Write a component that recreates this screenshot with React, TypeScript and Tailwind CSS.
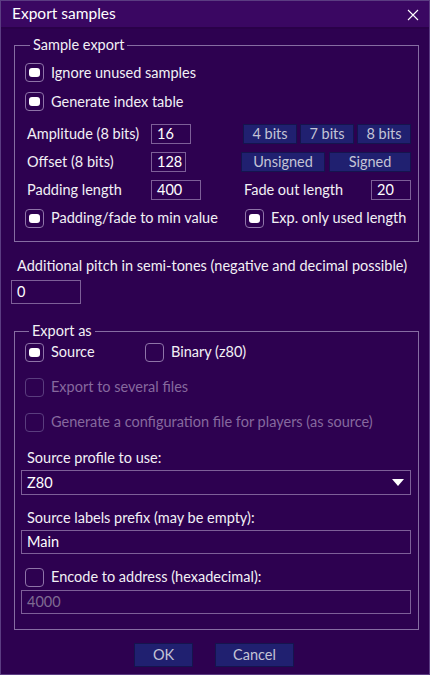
import React from 'react';

const font = { fontFamily: 'Lato, "Noto Sans", sans-serif' };

function Check({ checked = false, disabled = false }: { checked?: boolean; disabled?: boolean }) {
    return (
        <span
            className={`flex h-[19px] w-[19px] shrink-0 items-center justify-center rounded-[4px] border-[1.5px] ${
                disabled ? 'border-[#5a3d7e]' : 'border-[#8e74a8]'
            }`}
        >
            {checked && <span className="h-[9px] w-[11px] rounded-[3px] bg-white" />}
        </span>
    );
}

function CheckRow({ label, checked, disabled, className = '' }: { label: string; checked?: boolean; disabled?: boolean; className?: string }) {
    return (
        <div className={`flex items-center gap-[7px] ${className}`}>
            <Check checked={checked} disabled={disabled} />
            <span className={disabled ? 'text-[#86699e]' : 'text-[#f2f0f5]'}>{label}</span>
        </div>
    );
}

function Field({ value, className = '', dim = false }: { value: string; className?: string; dim?: boolean }) {
    return (
        <div className={`flex items-center border border-[#7d5f98] px-[5px] ${dim ? 'text-[#7f6b92]' : 'text-white'} ${className}`}>{value}</div>
    );
}

function Btn({ label, className = '' }: { label: string; className?: string }) {
    return (
        <div className={`flex h-[20px] items-center justify-center border border-[#15144e] bg-[#202070] text-[#c4c4d6] ${className}`}>{label}</div>
    );
}

export default function App() {
    return (
        <div className="flex h-[675px] w-[430px] flex-col border border-[#5b3c82] bg-[#2d0150] text-[14.5px] text-[#f2f0f5]" style={font}>
            <div className="flex h-[26px] shrink-0 items-center justify-between bg-[#3a0762] pr-[10px] pl-[11px]">
                <span className="text-[15.5px] text-white">Export samples</span>
                <svg width="12" height="12" viewBox="0 0 12 12" className="mt-[1px]">
                    <path d="M1 1L11 11M11 1L1 11" stroke="white" strokeWidth="1.1" fill="none" />
                </svg>
            </div>
            <div className="h-[2px] bg-[#2a0149]" />

            <fieldset className="mt-[7px] ml-[13px] w-[405px] border border-[#866ca2] pt-[4px] pr-[7px] pb-[9px] pl-[10px]">
                <legend className="ml-[5px] h-[18px] px-[3px] leading-[18px]">Sample export</legend>
                <CheckRow className="h-[29px]" label="Ignore unused samples" checked />
                <CheckRow className="h-[29px]" label="Generate index table" checked />
                <div className="mt-[4px] flex h-[28px] items-center pl-[2px]">
                    <span className="w-[124px]">Amplitude (8 bits)</span>
                    <Field value="16" className="h-[20px] w-[40px]" />
                    <div className="ml-auto flex gap-[3px]">
                        <Btn label="4 bits" className="w-[54px]" />
                        <Btn label="7 bits" className="w-[54px]" />
                        <Btn label="8 bits" className="w-[54px]" />
                    </div>
                </div>
                <div className="flex h-[28px] items-center pl-[2px]">
                    <span className="w-[124px]">Offset (8 bits)</span>
                    <Field value="128" className="h-[20px] w-[35px]" />
                    <div className="ml-auto flex gap-[4px]">
                        <Btn label="Unsigned" className="w-[84px]" />
                        <Btn label="Signed" className="w-[82px]" />
                    </div>
                </div>
                <div className="flex h-[28px] items-center pl-[2px]">
                    <div className="flex w-[217px] items-center">
                        <span className="w-[124px]">Padding length</span>
                        <Field value="400" className="h-[20px] w-[50px]" />
                    </div>
                    <span className="flex-1">Fade out length</span>
                    <Field value="20" className="h-[20px] w-[40px]" />
                </div>
                <div className="flex h-[28px] items-center">
                    <CheckRow className="w-[220px]" label="Padding/fade to min value" checked />
                    <CheckRow label="Exp. only used length" checked />
                </div>
            </fieldset>

            <div className="mt-[14px] flex h-[20px] items-center pl-[16px]">Additional pitch in semi-tones (negative and decimal possible)</div>
            <Field value="0" className="mt-[4px] ml-[10px] h-[24px] w-[70px]" />

            <fieldset className="mt-[18px] ml-[13px] w-[405px] border border-[#866ca2] pr-[7px] pb-[15px] pl-[10px]">
                <legend className="ml-[4px] h-[18px] px-[3px] leading-[18px]">Export as</legend>
                <div className="flex h-[24px] items-center">
                    <CheckRow className="w-[120px]" label="Source" checked />
                    <CheckRow label="Binary (z80)" />
                </div>
                <CheckRow className="mt-[11px] h-[24px]" label="Export to several files" disabled />
                <CheckRow className="mt-[11px] h-[24px]" label="Generate a configuration file for players (as source)" disabled />
                <div className="-ml-[4px]">
                    <div className="mt-[12px] flex h-[24px] items-center pl-[6px]">Source profile to use:</div>
                    <div className="flex h-[25px] items-center justify-between border border-[#7d5f98] pr-[6px] pl-[5px] text-white">
                        <span>Z80</span>
                        <svg width="12" height="7" viewBox="0 0 12 7">
                            <path d="M0 0H12L6 7Z" fill="white" />
                        </svg>
                    </div>
                    <div className="mt-[11px] flex h-[24px] items-center pl-[6px]">Source labels prefix (may be empty):</div>
                    <Field value="Main" className="h-[24px] w-full" />
                    <CheckRow className="mt-[11px] h-[24px] pl-[4px]" label="Encode to address (hexadecimal):" />
                    <Field value="4000" dim className="mt-[1px] h-[24px] w-full" />
                </div>
            </fieldset>

            <div className="mt-[13px] flex justify-center gap-[22px] pr-[2px]">
                <Btn label="OK" className="h-[24px] w-[59px]" />
                <Btn label="Cancel" className="h-[24px] w-[79px]" />
            </div>
        </div>
    );
}
